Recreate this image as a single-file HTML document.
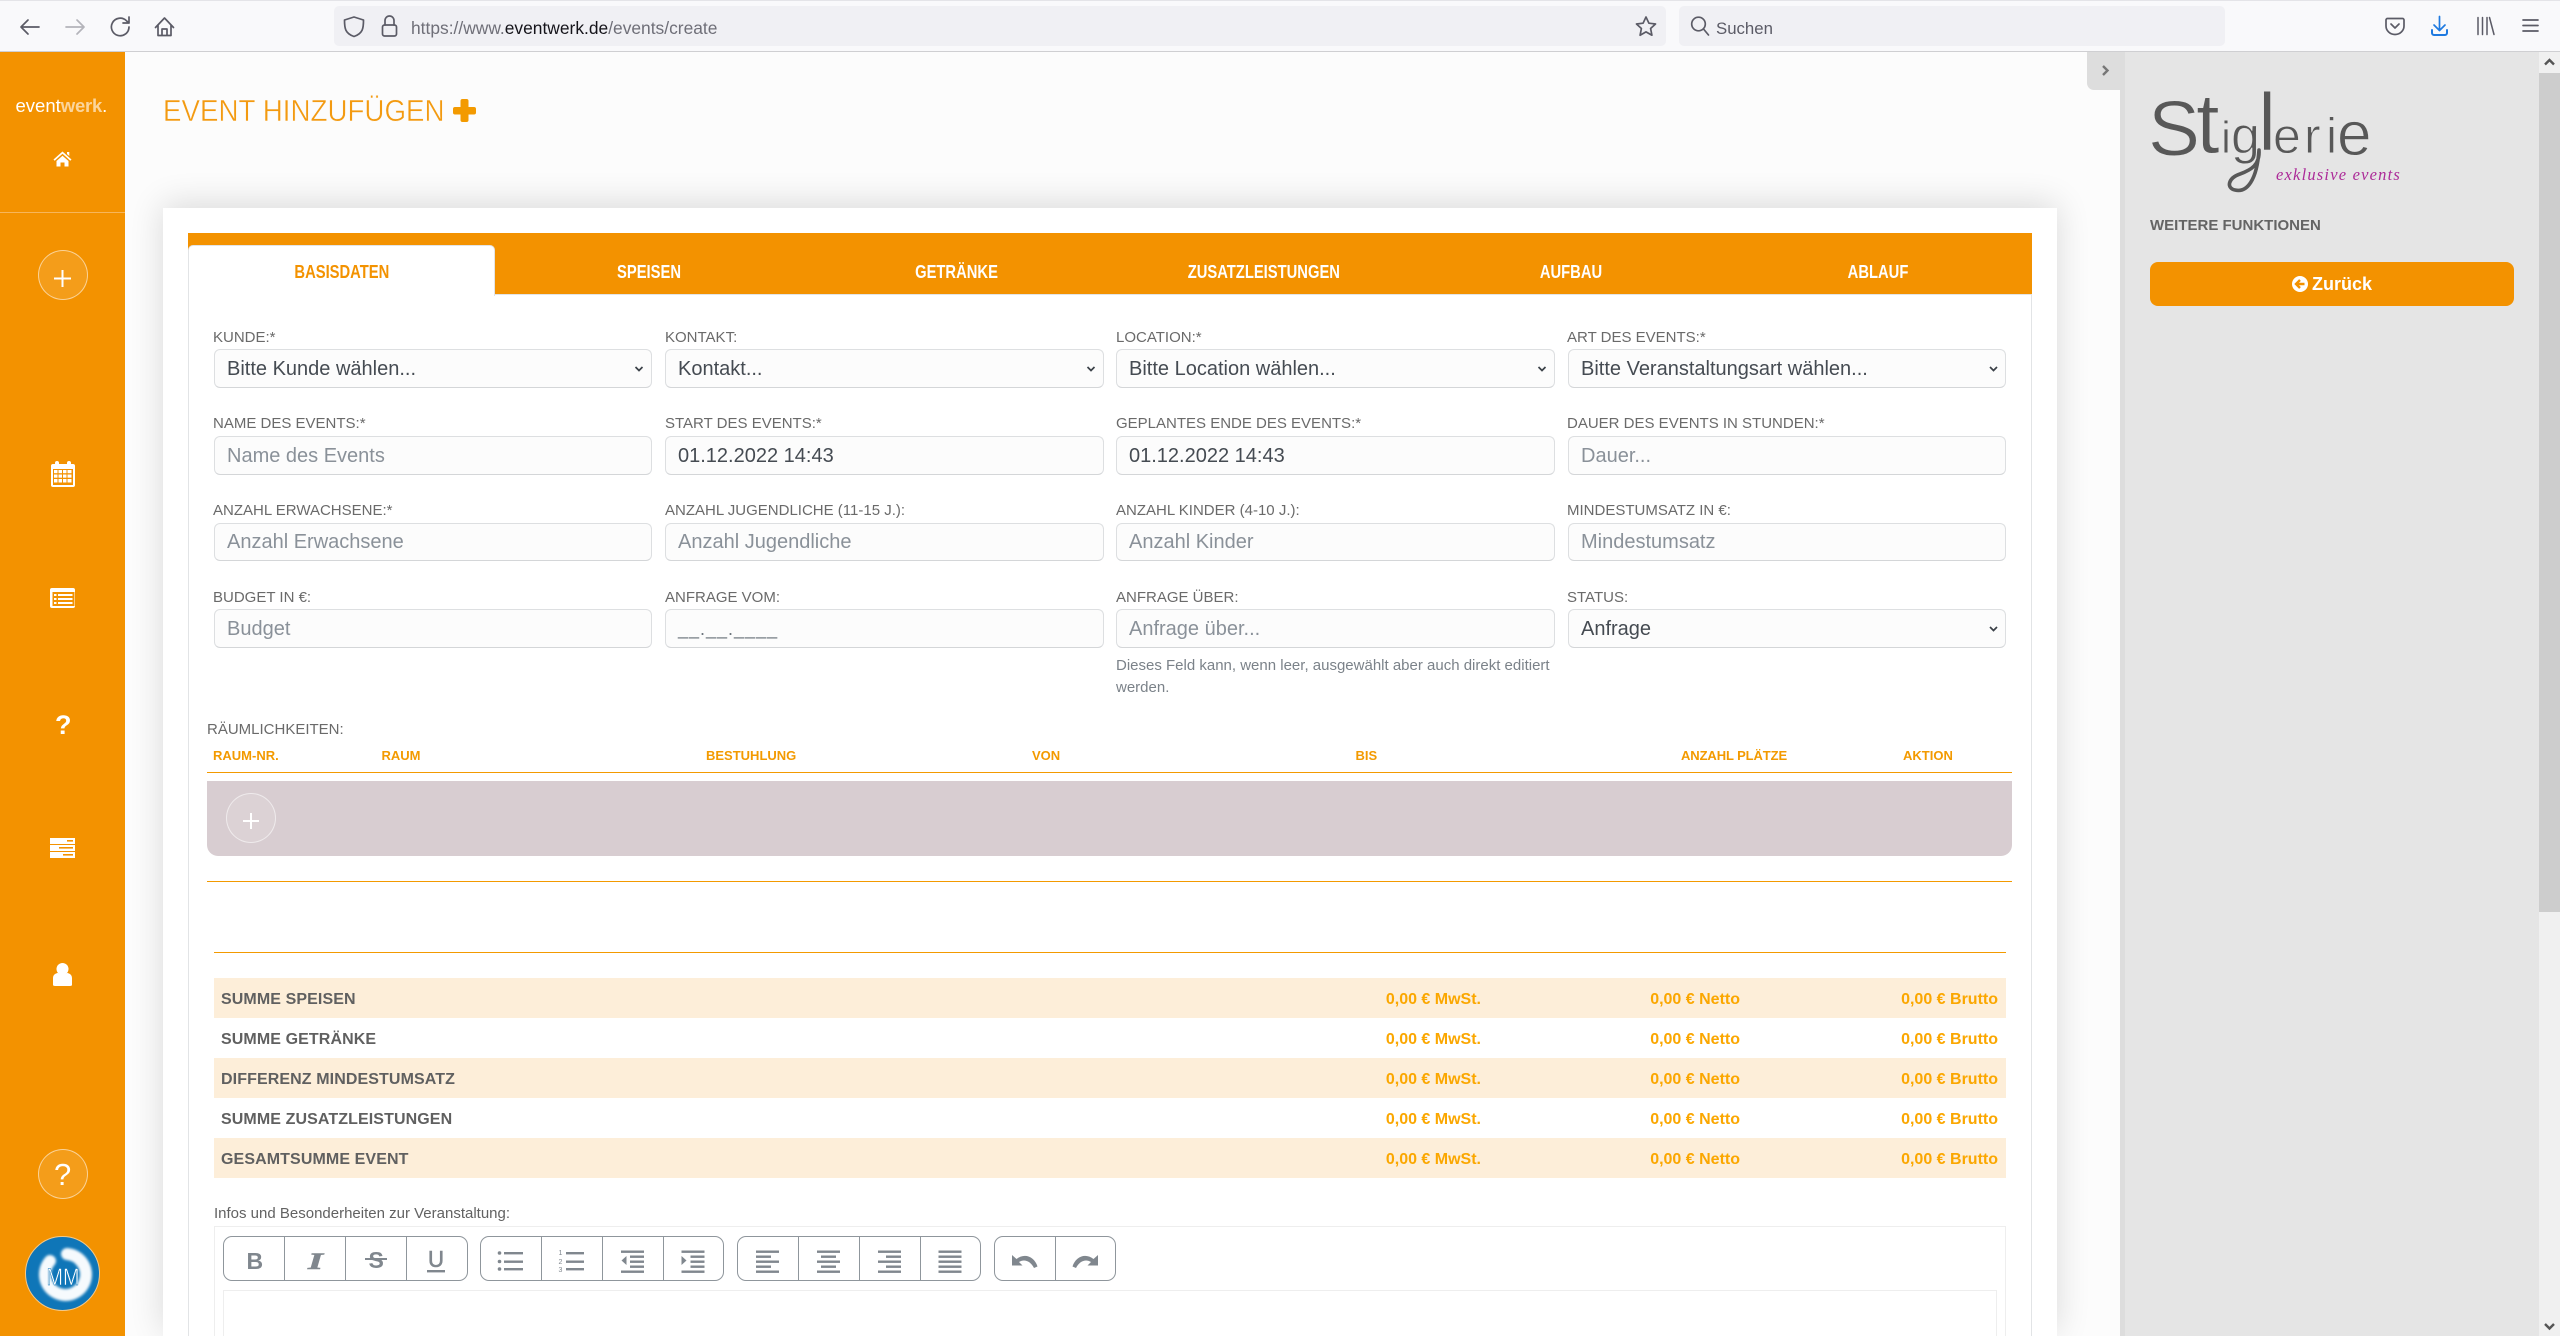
<!DOCTYPE html>
<html lang="de">
<head>
<meta charset="utf-8">
<title>Event hinzufügen</title>
<style>
html,body{margin:0;padding:0;width:2560px;height:1336px;overflow:hidden}
body{font-family:"Liberation Sans",sans-serif;background:#fcfcfc}
#root{position:relative;width:2560px;height:1336px;overflow:hidden;background:#fcfcfc}
.a{position:absolute}
.t{position:absolute;white-space:nowrap}
.lb{position:absolute;white-space:nowrap;font-size:15px;line-height:20px;color:#6a6a6a;margin-top:1px}
.f{position:absolute;box-sizing:border-box;width:438px;height:39px;border:1px solid #dddfe1;border-bottom-color:#d4d6d8;border-radius:6px;background:#fcfcfc;font-size:20px;line-height:38.5px;padding-left:12px;color:#8a9199;white-space:nowrap}
.v{color:#454b52}
.tab{position:absolute;top:262px;width:307.33px;text-align:center;line-height:20px;font-size:18px;font-weight:bold;color:#fff}
.tab span{display:inline-block;transform:scaleX(.82)}
.th{position:absolute;top:746px;font-size:13px;line-height:20px;font-weight:bold;color:#f39a00;white-space:nowrap}
.r{position:absolute;left:214px;width:1792px;height:40px}
.o{background:#fdeed9}
.r b{position:absolute;left:7px;top:1.5px;line-height:40px;font-size:16px;letter-spacing:.1px;color:#606060;white-space:nowrap}
.r i{position:absolute;top:1.5px;font-style:normal;font-weight:bold;line-height:40px;font-size:16px;color:#fba700;white-space:nowrap;text-align:right}
.m{right:525px}.n{right:266px}.bb{right:8px}
.g{position:absolute;box-sizing:border-box;top:1236px;height:45px;border:1px solid #8f969c;border-radius:9px;background:#fff}
</style>
</head>
<body>
<div id="root">

<!-- browser bar -->
<div class="a" style="left:0;top:0;width:2560px;height:51px;background:#f9f9fb"></div>
<div class="a" style="left:0;top:0;width:2560px;height:1px;background:#e4e4e8"></div>
<div class="a" style="left:0;top:51px;width:2560px;height:1px;background:#cfcfd2"></div>
<div class="a" style="left:334px;top:6px;width:1332px;height:40px;background:#f0f0f4;border-radius:5px"></div>
<div class="a" style="left:1679px;top:6px;width:546px;height:40px;background:#f0f0f4;border-radius:5px"></div>
<div class="t" style="left:411px;top:16px;font-size:17.4px;line-height:24px;color:#6f6f78">https://www.<span style="color:#15141a">eventwerk.de</span>/events/create</div>
<div class="t" style="left:1716px;top:16.5px;font-size:16.8px;line-height:24px;color:#5b5b66">Suchen</div>

<!-- sidebar -->
<div class="a" style="left:0;top:52px;width:125px;height:1284px;background:#f39200"></div>
<div class="a" style="left:0;top:212px;width:125px;height:1px;background:#f7b65a"></div>
<div class="t" style="left:15.5px;top:95px;font-size:18.5px;line-height:22px;color:#fff">event<span style="color:#fbd59c;font-weight:bold;letter-spacing:-.2px">werk</span>.</div>
<div class="a" style="left:38px;top:250px;width:50px;height:50px;box-sizing:border-box;border:1px solid rgba(255,255,255,.55);border-radius:50%;background:rgba(255,255,255,.1)"></div>
<div class="a" style="left:38px;top:1149px;width:50px;height:50px;box-sizing:border-box;border:1px solid rgba(255,255,255,.55);border-radius:50%;background:rgba(255,255,255,.1)"></div>
<div class="t" style="left:54px;top:1157px;font-size:31px;line-height:36px;color:#fff">?</div>
<div class="t" style="left:55px;top:709px;font-size:27px;line-height:32px;font-weight:bold;color:#fff">?</div>

<!-- title -->
<div class="t" style="left:162.5px;top:93px;font-size:31px;line-height:36px;color:#f39a10;-webkit-text-stroke:.45px #fcfcfc;transform-origin:0 50%;transform:scaleX(.895)">EVENT HINZUFÜGEN</div>

<!-- right panel -->
<div class="a" style="left:2120px;top:52px;width:5px;height:1284px;background:#dddddd"></div>
<div class="a" style="left:2125px;top:52px;width:414px;height:1284px;background:#e5e5e5"></div>
<div class="a" style="left:2087px;top:52px;width:33px;height:38px;background:#dddddd;border-bottom-left-radius:7px"></div>
<div class="t" style="left:2150px;top:216px;font-size:15px;line-height:20px;font-weight:bold;color:#646464">WEITERE FUNKTIONEN</div>
<div class="a" style="left:2150px;top:262px;width:364px;height:44px;background:#f39200;border-radius:8px"></div>
<div class="t" style="left:2312px;top:273px;font-size:18px;line-height:22px;font-weight:bold;color:#fff">Zurück</div>

<!-- scrollbar -->
<div class="a" style="left:2539px;top:52px;width:21px;height:1284px;background:#f0f0f0"></div>
<div class="a" style="left:2539px;top:73px;width:21px;height:839px;background:#cdcdcd"></div>

<!-- card -->
<div class="a" style="left:163px;top:208px;width:1894px;height:1128px;background:#fff;box-shadow:0 -4px 32px rgba(0,0,0,.14)"></div>
<div class="a" style="left:188px;top:233px;width:1844px;height:61px;background:#f39200"></div>
<div class="a" style="left:188px;top:294px;width:1844px;height:1042px;box-sizing:border-box;border:1px solid #e2e4e6;border-bottom:0"></div>
<div class="a" style="left:188px;top:245px;width:307px;height:51px;background:#fff;border-radius:5px 5px 0 0;border:1px solid #e2e4e6;border-bottom:0;box-sizing:border-box"></div>
<div class="tab" style="left:188px;color:#f39200"><span>BASISDATEN</span></div>
<div class="tab" style="left:495.3px"><span>SPEISEN</span></div>
<div class="tab" style="left:802.7px"><span>GETRÄNKE</span></div>
<div class="tab" style="left:1110px"><span>ZUSATZLEISTUNGEN</span></div>
<div class="tab" style="left:1417.3px"><span>AUFBAU</span></div>
<div class="tab" style="left:1724.7px"><span>ABLAUF</span></div>

<!-- form row 1 -->
<div class="lb" style="left:213px;top:327px">KUNDE:*</div>
<div class="lb" style="left:665px;top:327px">KONTAKT:</div>
<div class="lb" style="left:1116px;top:327px">LOCATION:*</div>
<div class="lb" style="left:1567px;top:327px">ART DES EVENTS:*</div>
<div class="f v" style="left:214px;top:349px">Bitte Kunde wählen...</div>
<div class="f v" style="left:665px;top:349px;width:439px">Kontakt...</div>
<div class="f v" style="left:1116px;top:349px;width:439px">Bitte Location wählen...</div>
<div class="f v" style="left:1568px;top:349px">Bitte Veranstaltungsart wählen...</div>
<!-- form row 2 -->
<div class="lb" style="left:213px;top:413px">NAME DES EVENTS:*</div>
<div class="lb" style="left:665px;top:413px">START DES EVENTS:*</div>
<div class="lb" style="left:1116px;top:413px">GEPLANTES ENDE DES EVENTS:*</div>
<div class="lb" style="left:1567px;top:413px">DAUER DES EVENTS IN STUNDEN:*</div>
<div class="f" style="left:214px;top:436px">Name des Events</div>
<div class="f v" style="left:665px;top:436px;width:439px">01.12.2022 14:43</div>
<div class="f v" style="left:1116px;top:436px;width:439px">01.12.2022 14:43</div>
<div class="f" style="left:1568px;top:436px">Dauer...</div>
<!-- form row 3 -->
<div class="lb" style="left:213px;top:500px">ANZAHL ERWACHSENE:*</div>
<div class="lb" style="left:665px;top:500px">ANZAHL JUGENDLICHE (11-15 J.):</div>
<div class="lb" style="left:1116px;top:500px">ANZAHL KINDER (4-10 J.):</div>
<div class="lb" style="left:1567px;top:500px">MINDESTUMSATZ IN €:</div>
<div class="f" style="left:214px;top:523px;height:38px;line-height:37.5px">Anzahl Erwachsene</div>
<div class="f" style="left:665px;top:523px;height:38px;line-height:37.5px;width:439px">Anzahl Jugendliche</div>
<div class="f" style="left:1116px;top:523px;height:38px;line-height:37.5px;width:439px">Anzahl Kinder</div>
<div class="f" style="left:1568px;top:523px;height:38px;line-height:37.5px">Mindestumsatz</div>
<!-- form row 4 -->
<div class="lb" style="left:213px;top:587px">BUDGET IN €:</div>
<div class="lb" style="left:665px;top:587px">ANFRAGE VOM:</div>
<div class="lb" style="left:1116px;top:587px">ANFRAGE ÜBER:</div>
<div class="lb" style="left:1567px;top:587px">STATUS:</div>
<div class="f" style="left:214px;top:609px">Budget</div>
<div class="f" style="left:665px;top:609px;width:439px;color:#6c757d;font-size:18px;letter-spacing:1px">__.__.____</div>
<div class="f" style="left:1116px;top:609px;width:439px">Anfrage über...</div>
<div class="f v" style="left:1568px;top:609px">Anfrage</div>
<div class="t" style="left:1116px;top:655px;font-size:15px;line-height:22px;color:#7b8289;width:445px;white-space:normal">Dieses Feld kann, wenn leer, ausgewählt aber auch direkt editiert werden.</div>

<!-- rooms -->
<div class="lb" style="left:207px;top:720px;margin:0">RÄUMLICHKEITEN:</div>
<div class="th" style="left:213px">RAUM-NR.</div>
<div class="th" style="left:381.5px">RAUM</div>
<div class="th" style="left:706px">BESTUHLUNG</div>
<div class="th" style="left:1032px">VON</div>
<div class="th" style="left:1355.5px">BIS</div>
<div class="th" style="left:1681px;letter-spacing:-.1px">ANZAHL PLÄTZE</div>
<div class="th" style="left:1903px">AKTION</div>
<div class="a" style="left:207px;top:772px;width:1805px;height:1px;background:#f39a00"></div>
<div class="a" style="left:207px;top:781px;width:1805px;height:75px;background:#d8cdd1;border-radius:0 0 11px 11px"></div>
<div class="a" style="left:226px;top:793px;width:50px;height:50px;box-sizing:border-box;border:1px solid rgba(255,255,255,.55);border-radius:50%;background:rgba(255,255,255,.1)"></div>
<div class="a" style="left:207px;top:881px;width:1805px;height:1px;background:#f39a00"></div>
<div class="a" style="left:214px;top:952px;width:1792px;height:1px;background:#f39a00"></div>

<!-- totals -->
<div class="r o" style="top:978px"><b>SUMME SPEISEN</b><i class="m">0,00 € MwSt.</i><i class="n">0,00 € Netto</i><i class="bb">0,00 € Brutto</i></div>
<div class="r" style="top:1018px"><b>SUMME GETRÄNKE</b><i class="m">0,00 € MwSt.</i><i class="n">0,00 € Netto</i><i class="bb">0,00 € Brutto</i></div>
<div class="r o" style="top:1058px"><b>DIFFERENZ MINDESTUMSATZ</b><i class="m">0,00 € MwSt.</i><i class="n">0,00 € Netto</i><i class="bb">0,00 € Brutto</i></div>
<div class="r" style="top:1098px"><b>SUMME ZUSATZLEISTUNGEN</b><i class="m">0,00 € MwSt.</i><i class="n">0,00 € Netto</i><i class="bb">0,00 € Brutto</i></div>
<div class="r o" style="top:1138px"><b>GESAMTSUMME EVENT</b><i class="m">0,00 € MwSt.</i><i class="n">0,00 € Netto</i><i class="bb">0,00 € Brutto</i></div>

<!-- editor -->
<div class="t" style="left:214px;top:1204px;font-size:15px;line-height:20px;color:#626262">Infos und Besonderheiten zur Veranstaltung:</div>
<div class="a" style="left:214px;top:1226px;width:1792px;height:110px;box-sizing:border-box;border:1px solid #eeeeee;border-bottom:0"></div>
<div class="a" style="left:223px;top:1290px;width:1774px;height:46px;box-sizing:border-box;border:1px solid #eeeeee;border-bottom:0"></div>
<div class="g" style="left:223px;width:245px"></div>
<div class="g" style="left:480px;width:244px"></div>
<div class="g" style="left:737px;width:244px"></div>
<div class="g" style="left:994px;width:122px"></div>

<!-- icon layer -->
<svg class="a" style="left:0;top:0;display:block" width="2560" height="1336" viewBox="0 0 2560 1336" xmlns="http://www.w3.org/2000/svg">
  <!-- browser icons -->
  <g fill="none" stroke="#5b5b66" stroke-width="1.7" stroke-linecap="round" stroke-linejoin="round">
    <path d="M39 27H21M28 20l-7 7 7 7"/>
    <path d="M66 27H84M77 20l7 7-7 7" stroke="#b4b4ba"/>
    <path d="M129 27a8.8 8.8 0 1 1-2.6-6.3L129 23M129 17v6h-6"/>
    <path d="M155.5 27.5L164.5 18l9 9.5M158 25v10.5h13V25M162 35.5v-6.5h5v6.5"/>
    <path d="M354 17l9.500 3c0 8-.5 13.500-9.500 16.500c-9-3-9.500-8.500-9.500-16.500z"/>
    <rect x="382.500" y="25" width="14" height="11" rx="2"/>
    <path d="M385 25v-4.500a4.500 4.500 0 0 1 9 0V25"/>
    <path d="M1646 17l2.900 6.200 6.600.8-4.900 4.500 1.300 6.700-5.900-3.300-5.900 3.300 1.300-6.700-4.900-4.500 6.600-.8z"/>
    <circle cx="1698.500" cy="24" r="6.800"/>
    <path d="M1703.500 29l5 6"/>
    <path d="M2387.500 18.500h15a1.500 1.500 0 0 1 1.500 1.500v6a9 8.500 0 0 1-18 0v-6a1.500 1.500 0 0 1 1.500-1.500z"/>
    <path d="M2391 24l4 4 4-4"/>
    <path d="M2478 17.500v17M2482.500 17.500v17M2487 17.500v17M2489.500 17.500l4.500 17" stroke-width="1.500"/>
    <path d="M2523 20h15M2523 25.500h15M2523 31h15"/>
    <path d="M2439.500 16.500V30M2434 25l5.500 5.500L2445 25" stroke="#1f7ae0"/>
    <path d="M2432 30v3a2 2 0 0 0 2 2h11a2 2 0 0 0 2-2v-3" stroke="#1f7ae0" stroke-width="2"/>
  </g>

  <!-- sidebar icons -->
  <g fill="#fff">
    <g transform="translate(0 -1.500)">
    <path d="M62.500 153L71.500 161l-1.200 1.300-7.800-7-7.800 7L53.500 161zM56.500 162.500l6-5.300 6 5.300V168h-4v-4h-4v4h-4z"/>
    <path d="M67 153.500h2.300v4l-2.300-2z"/>
    </g>
    <rect x="51" y="464" width="24" height="23" rx="2"/>
    <rect x="55" y="461" width="4" height="7" rx="2"/><rect x="67" y="461" width="4" height="7" rx="2"/>
    <rect x="50" y="588" width="25" height="20" rx="2"/>
    <rect x="50" y="838" width="25" height="6"/><rect x="50" y="845" width="25" height="6"/><rect x="50" y="852" width="25" height="6"/>
    <circle cx="62.500" cy="969" r="6"/>
    <path d="M53 985v-7c0-4 4-5 5-5 2 2 7 2 9 0 1 0 5 1 5 5v7c0 .5-1 1-2 1H55c-1 0-2-.5-2-1z"/>
    <rect x="61.500" y="270" width="2" height="17"/><rect x="54" y="277.500" width="17" height="2"/>
    <rect x="250" y="813" width="2" height="16"/><rect x="243" y="820" width="16" height="2"/>
  </g>
  <g fill="#f39200">
    <rect x="53" y="469" width="20" height="16"/>
    <g fill="#fff">
      <rect x="54" y="470" width="3.500" height="3.200"/><rect x="58.500" y="470" width="3.500" height="3.200"/><rect x="63" y="470" width="3.500" height="3.200"/><rect x="67.500" y="470" width="4" height="3.200"/>
      <rect x="54" y="474.500" width="3.500" height="3.200"/><rect x="58.500" y="474.500" width="3.500" height="3.200"/><rect x="63" y="474.500" width="3.500" height="3.200"/><rect x="67.500" y="474.500" width="4" height="3.200"/>
      <rect x="54" y="479" width="3.500" height="3.500"/><rect x="58.500" y="479" width="3.500" height="3.500"/><rect x="63" y="479" width="3.500" height="3.500"/><rect x="67.500" y="479" width="4" height="3.500"/>
    </g>
    <rect x="52.500" y="592" width="22" height="14" />
    <g fill="#fff">
      <rect x="54" y="594" width="2.500" height="2"/><rect x="58" y="594" width="14.500" height="2"/>
      <rect x="54" y="598" width="2.500" height="2"/><rect x="58" y="598" width="14.500" height="2"/>
      <rect x="54" y="602" width="2.500" height="2"/><rect x="58" y="602" width="14.500" height="2"/>
    </g>
    <rect x="67" y="840" width="6" height="1.600"/><rect x="59" y="847" width="14" height="1.600"/><rect x="63" y="854" width="10" height="1.600"/>
  </g>

  <!-- avatar -->
  <circle cx="62.500" cy="1273.500" r="37" fill="#0f76b8" stroke="#f3c98a" stroke-width="1"/>
  <g filter="url(#soft)">
    <path d="M50 1261a20.500 20.500 0 1 0 17-7" fill="none" stroke="#f6fafd" stroke-width="12" stroke-linecap="round"/>
  </g>
  <defs><filter id="soft" x="-20%" y="-20%" width="140%" height="140%"><feGaussianBlur stdDeviation="1.400"/></filter></defs>
  <text x="63" y="1285" font-family="Liberation Sans, sans-serif" font-size="24" fill="#fff" stroke="#0f76b8" stroke-width=".5" text-anchor="middle" textLength="33" lengthAdjust="spacingAndGlyphs">MM</text>

  <!-- title plus -->
  <rect x="460.500" y="99" width="8" height="23" rx="2" fill="#f39a00"/>
  <rect x="453" y="107" width="23" height="7.500" rx="2" fill="#f39a00"/>

  <!-- panel chevron -->
  <path d="M2103 66l4.500 4.500-4.500 4.500" fill="none" stroke="#777" stroke-width="2.400"/>

  <!-- logo -->
  <text font-family="Liberation Sans, sans-serif" fill="#585858" stroke="#e5e5e5" stroke-width=".9">
    <tspan x="2148" y="155" font-size="78">S</tspan><tspan x="2196" y="153" font-size="85">t</tspan><tspan x="2221" y="153" font-size="45">i</tspan><tspan x="2231" y="153" font-size="52">g</tspan><tspan x="2258" y="150" font-size="82">l</tspan><tspan x="2273" y="153" font-size="50">e</tspan><tspan x="2304" y="153" font-size="50">r</tspan><tspan x="2326" y="153" font-size="50">i</tspan><tspan x="2337" y="155" font-size="62">e</tspan>
  </text>
  <path d="M2259 150c1 15-8 20-19 24c-12 4-14 14-5 16c12 3 22-10 24-40" fill="none" stroke="#585858" stroke-width="3.600" stroke-linecap="round"/>
  <text x="2276" y="180" font-family="Liberation Serif, serif" font-style="italic" font-size="16.500" letter-spacing="1.200" fill="#ac2a98">exklusive events</text>

  <!-- back icon -->
  <circle cx="2300" cy="284" r="8" fill="#fff"/>
  <path d="M2304.500 284h-8M2300 280l-4 4 4 4" fill="none" stroke="#f39200" stroke-width="2.400"/>

  <!-- scrollbar arrows -->
  <path d="M2545 64.500l4.500-4.500 4.500 4.500" fill="none" stroke="#555" stroke-width="2.400"/>
  <path d="M2545 1324l4.500 4.500 4.500-4.500" fill="none" stroke="#555" stroke-width="2.400"/>

  <!-- select chevrons -->
  <g fill="none" stroke="#3b4148" stroke-width="1.700">
    <path d="M635.500 367l3.500 3.500 3.500-3.500"/>
    <path d="M1087.500 367l3.500 3.500 3.500-3.500"/>
    <path d="M1538.500 367l3.500 3.500 3.500-3.500"/>
    <path d="M1990 367l3.500 3.500 3.500-3.500"/>
    <path d="M1990 627l3.500 3.500 3.500-3.500"/>
  </g>

  <!-- toolbar -->
  <g stroke="#8f969c" stroke-width="1">
    <path d="M284.500 1236v45M345.500 1236v45M406.500 1236v45M541.500 1236v45M602.500 1236v45M663.500 1236v45M798.500 1236v45M859.500 1236v45M920.500 1236v45M1055.500 1236v45"/>
  </g>
  <g fill="#80878e" font-family="Liberation Sans, sans-serif" font-weight="bold" font-size="23">
    <text x="246.500" y="1269">B</text>
    <text x="308" y="1269" font-family="Liberation Serif, serif" font-style="italic" stroke="#80878e" stroke-width=".6" textLength="15" lengthAdjust="spacingAndGlyphs">I</text>
    <text x="368.500" y="1268" >S</text>
    <rect x="365" y="1258" width="22" height="2"/>
    <text x="428" y="1267" font-size="23" font-weight="normal" stroke="#80878e" stroke-width=".6" textLength="16" lengthAdjust="spacingAndGlyphs">U</text>
    <rect x="427" y="1270" width="18" height="2.400"/>
  </g>
  <g fill="#80878e">
    <!-- ul -->
    <circle cx="499.500" cy="1253" r="1.800"/><circle cx="499.500" cy="1261.500" r="1.800"/><circle cx="499.500" cy="1269" r="1.800"/>
    <rect x="504" y="1252" width="19" height="2.400"/><rect x="504" y="1260.500" width="19" height="2.400"/><rect x="504" y="1268" width="19" height="2.400"/>
    <!-- ol -->
    <rect x="566" y="1252" width="18" height="2.400"/><rect x="566" y="1260.500" width="18" height="2.400"/><rect x="566" y="1268" width="18" height="2.400"/>
    <text x="558.500" y="1255" font-family="Liberation Sans, sans-serif" font-size="7">1</text>
    <text x="558.500" y="1264" font-family="Liberation Sans, sans-serif" font-size="7">2</text>
    <text x="558.500" y="1272" font-family="Liberation Sans, sans-serif" font-size="7">3</text>
    <!-- outdent -->
    <rect x="621" y="1250.500" width="23" height="2.400"/><rect x="630" y="1255.500" width="14" height="2.400"/><rect x="630" y="1260.500" width="14" height="2.400"/><rect x="630" y="1265.500" width="14" height="2.400"/><rect x="621" y="1270.500" width="23" height="2.400"/>
    <path d="M626.500 1256v9l-5-4.500z"/>
    <!-- indent -->
    <rect x="681.500" y="1250.500" width="23" height="2.400"/><rect x="690.500" y="1255.500" width="14" height="2.400"/><rect x="690.500" y="1260.500" width="14" height="2.400"/><rect x="690.500" y="1265.500" width="14" height="2.400"/><rect x="681.500" y="1270.500" width="23" height="2.400"/>
    <path d="M681.500 1256v9l5-4.500z"/>
    <!-- align left -->
    <rect x="756" y="1250.500" width="23" height="2.400"/><rect x="756" y="1255.500" width="15" height="2.400"/><rect x="756" y="1260.500" width="23" height="2.400"/><rect x="756" y="1265.500" width="15" height="2.400"/><rect x="756" y="1270.500" width="23" height="2.400"/>
    <!-- align center -->
    <rect x="817" y="1250.500" width="23" height="2.400"/><rect x="821" y="1255.500" width="15" height="2.400"/><rect x="817" y="1260.500" width="23" height="2.400"/><rect x="821" y="1265.500" width="15" height="2.400"/><rect x="817" y="1270.500" width="23" height="2.400"/>
    <!-- align right -->
    <rect x="878" y="1250.500" width="23" height="2.400"/><rect x="886" y="1255.500" width="15" height="2.400"/><rect x="878" y="1260.500" width="23" height="2.400"/><rect x="886" y="1265.500" width="15" height="2.400"/><rect x="878" y="1270.500" width="23" height="2.400"/>
    <!-- justify -->
    <rect x="938.500" y="1250.500" width="23" height="2.400"/><rect x="938.500" y="1255.500" width="23" height="2.400"/><rect x="938.500" y="1260.500" width="23" height="2.400"/><rect x="938.500" y="1265.500" width="23" height="2.400"/><rect x="938.500" y="1270.500" width="23" height="2.400"/>
    <!-- undo / redo -->
    <path d="M1012 1255v10.500h10.500l-3.500-3.500c5-3 11-1.500 15 6l3.500-1.500c-3-10-13-14-21-7.500z"/>
    <path d="M1098 1255v10.500h-10.500l3.500-3.500c-5-3-11-1.500-15 6l-3.500-1.500c3-10 13-14 21-7.500z"/>
  </g>
</svg>
</div>
</body>
</html>
